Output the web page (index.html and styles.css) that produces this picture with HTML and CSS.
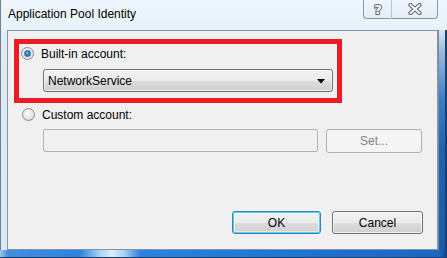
FILE: index.html
```html
<!DOCTYPE html>
<html lang="en">
<head>
    <meta charset="UTF-8">
    <title>Application Pool Identity</title>
    <link rel="stylesheet" href="styles.css">
</head>
<body>
    <div class="window">
        <div class="titlebar">
            <div class="title">Application Pool Identity</div>
            <div class="caption-buttons">
                <div class="cap-btn help-btn">
                    <svg width="12" height="14" viewBox="0 0 12 14">
                        <text x="6" y="12" text-anchor="middle" class="help-glyph">?</text>
                    </svg>
                </div>
                <div class="cap-btn close-btn">
                    <svg width="14" height="12" viewBox="0 0 14 12">
                        <path d="M2.5 2 L11.5 10 M11.5 2 L2.5 10" stroke="#5a6672" stroke-width="4.2" stroke-linecap="round"/>
                        <path d="M2.5 2 L11.5 10 M11.5 2 L2.5 10" stroke="#ffffff" stroke-width="2" stroke-linecap="round"/>
                    </svg>
                </div>
            </div>
        </div>
        <div class="frame-left"></div>
        <div class="content">
            <div class="highlight">
                <div class="radio-row">
                    <span class="radio checked"><span class="dot"></span></span>
                    <span class="label">Built-in account:</span>
                </div>
                <div class="dropdown">
                    <span class="dropdown-value">NetworkService</span>
                    <svg class="dropdown-arrow" width="8" height="5" viewBox="0 0 8 5">
                        <path d="M0 0 H8 L4 4.5 Z" fill="#000"/>
                    </svg>
                </div>
            </div>
            <div class="radio-row custom-row">
                <span class="radio"></span>
                <span class="label">Custom account:</span>
            </div>
            <div class="custom-fields">
                <div class="textbox"></div>
                <div class="btn disabled set-btn">Set...</div>
            </div>
            <div class="dialog-buttons">
                <div class="btn default ok-btn">OK</div>
                <div class="btn cancel-btn">Cancel</div>
            </div>
        </div>
        <div class="frame-right"></div>
        <div class="frame-bottom"></div>
    </div>
</body>
</html>
```

FILE: styles.css
```css
* {
    margin: 0;
    padding: 0;
    box-sizing: border-box;
}

body {
    width: 447px;
    height: 258px;
    overflow: hidden;
    font-family: 'Segoe UI', 'Liberation Sans', Arial, sans-serif;
    font-size: 12px;
    color: #000;
    background: #dfeaf5;
}

.window {
    width: 447px;
    height: 258px;
    display: grid;
    grid-template-columns: 7px 431px 9px;
    grid-template-rows: 30px 220px 8px;
    background: linear-gradient(to bottom, #e9f3fb 0, #dfebf6 40px, #dae8f4 100%);
}

.titlebar {
    grid-column: 1 / 4;
    grid-row: 1;
    display: flex;
    justify-content: space-between;
    align-items: flex-start;
    background: linear-gradient(to bottom, #eef6fc 0, #e6f1fa 100%);
    border-left: 1px solid #6e7f8f;
}

.title {
    padding: 7px 0 0 7px;
    line-height: 14px;
    color: #000;
}

.caption-buttons {
    display: flex;
    margin-right: 9px;
}

.cap-btn {
    height: 19px;
    display: flex;
    align-items: center;
    justify-content: center;
    border: 1px solid #8a98a6;
    border-top: none;
    background: linear-gradient(to bottom, #eef5fb 0, #e3eef8 100%);
}

.help-btn {
    width: 29px;
    border-bottom-left-radius: 4px;
    border-right: 1px solid #b8c4cf;
}

.close-btn {
    width: 46px;
    border-left: none;
    border-bottom-right-radius: 4px;
}

.help-glyph {
    font-family: 'DejaVu Sans', sans-serif;
    font-weight: bold;
    font-size: 13px;
    fill: #ffffff;
    stroke: #5a6672;
    stroke-width: 2px;
    paint-order: stroke;
}

.frame-left {
    grid-column: 1;
    grid-row: 2;
    border-left: 1px solid #6e7f8f;
}

.frame-right {
    grid-column: 3;
    grid-row: 2;
    background: linear-gradient(to bottom, #dbe8f4 0, #9ebddf 20px, #3a7cc6 70px, #1f62b2 120px, #1c5ba8 100%);
    border-left: 1px solid #7e8c99;
    border-right: 2px solid #1a3f6e;
}

.frame-bottom {
    grid-column: 1 / 4;
    grid-row: 3;
    background: linear-gradient(to right, #9cc6ee 0, #3f8ee0 8px, #2d82de 80px, #a9d3f5 100px, #d8eefc 112px, #a7d2f5 124px, #2d82de 140px, #1f73d2 300px, #1b66c2 440px, #14407a 100%);
    border-bottom: 1px solid #1a3f6e;
}

.content {
    grid-column: 2;
    grid-row: 2;
    background: #f0f0f0;
    border: 1px solid #8795a3;
    display: flex;
    flex-direction: column;
}

.highlight {
    width: 328px;
    height: 64px;
    margin: 8px 0 0 6px;
    border: 5px solid #ed1c24;
    padding: 3px 0 0 2px;
}

.radio-row {
    display: flex;
    align-items: center;
    height: 13px;
    gap: 7px;
}

.radio {
    width: 13px;
    height: 13px;
    border-radius: 50%;
    border: 1px solid #8a8c8e;
    background: radial-gradient(circle at 45% 40%, #fbfbfb 0, #e6e6e6 55%, #cfd0d1 100%);
    display: flex;
    align-items: center;
    justify-content: center;
}

.radio .dot {
    width: 7px;
    height: 7px;
    border-radius: 50%;
    background: radial-gradient(circle at 45% 40%, #7ed0f8 0, #2a86c8 45%, #174f86 100%);
    border: 1px solid #2b5f8f;
}

.label {
    line-height: 13px;
    padding-top: 1px;
}

.dropdown {
    width: 290px;
    height: 23px;
    margin: 9px 0 0 22px;
    border: 1px solid #707070;
    border-radius: 3px;
    background: linear-gradient(to bottom, #f2f2f2 0, #ebebeb 50%, #dddddd 50%, #cfcfcf 100%);
    display: flex;
    align-items: center;
    justify-content: space-between;
    padding: 0 7px 0 4px;
    box-shadow: inset 0 0 0 1px rgba(255, 255, 255, 0.7);
}

.dropdown-value {
    line-height: 14px;
}

.dropdown-arrow {
    margin-top: 1px;
}

.custom-row {
    margin: 5px 0 0 14px;
}

.custom-fields {
    display: flex;
    gap: 8px;
    margin: 8px 0 0 35px;
}

.textbox {
    width: 275px;
    height: 23px;
    border: 1px solid #adb2b5;
    border-radius: 2px;
    background: #f0f0f0;
}

.btn {
    height: 23px;
    display: flex;
    align-items: center;
    justify-content: center;
    border: 1px solid #707070;
    border-radius: 3px;
    background: linear-gradient(to bottom, #f2f2f2 0, #ebebeb 50%, #dddddd 50%, #cfcfcf 100%);
    box-shadow: inset 0 0 0 1px rgba(255, 255, 255, 0.7);
    line-height: 14px;
}

.btn.disabled {
    height: 24px;
    border-color: #adb2b5;
    background: #f4f4f4;
    color: #838383;
    box-shadow: none;
}

.set-btn {
    width: 96px;
}

.dialog-buttons {
    margin-top: auto;
    display: flex;
    justify-content: flex-end;
    gap: 11px;
    padding: 0 14px 15px 0;
}

.btn.default {
    border-color: #3c7fb1;
    box-shadow: inset 0 0 0 1px #48d7fb, inset 0 0 0 2px rgba(255, 255, 255, 0.5);
}

.ok-btn {
    width: 89px;
}

.cancel-btn {
    width: 91px;
}
```
